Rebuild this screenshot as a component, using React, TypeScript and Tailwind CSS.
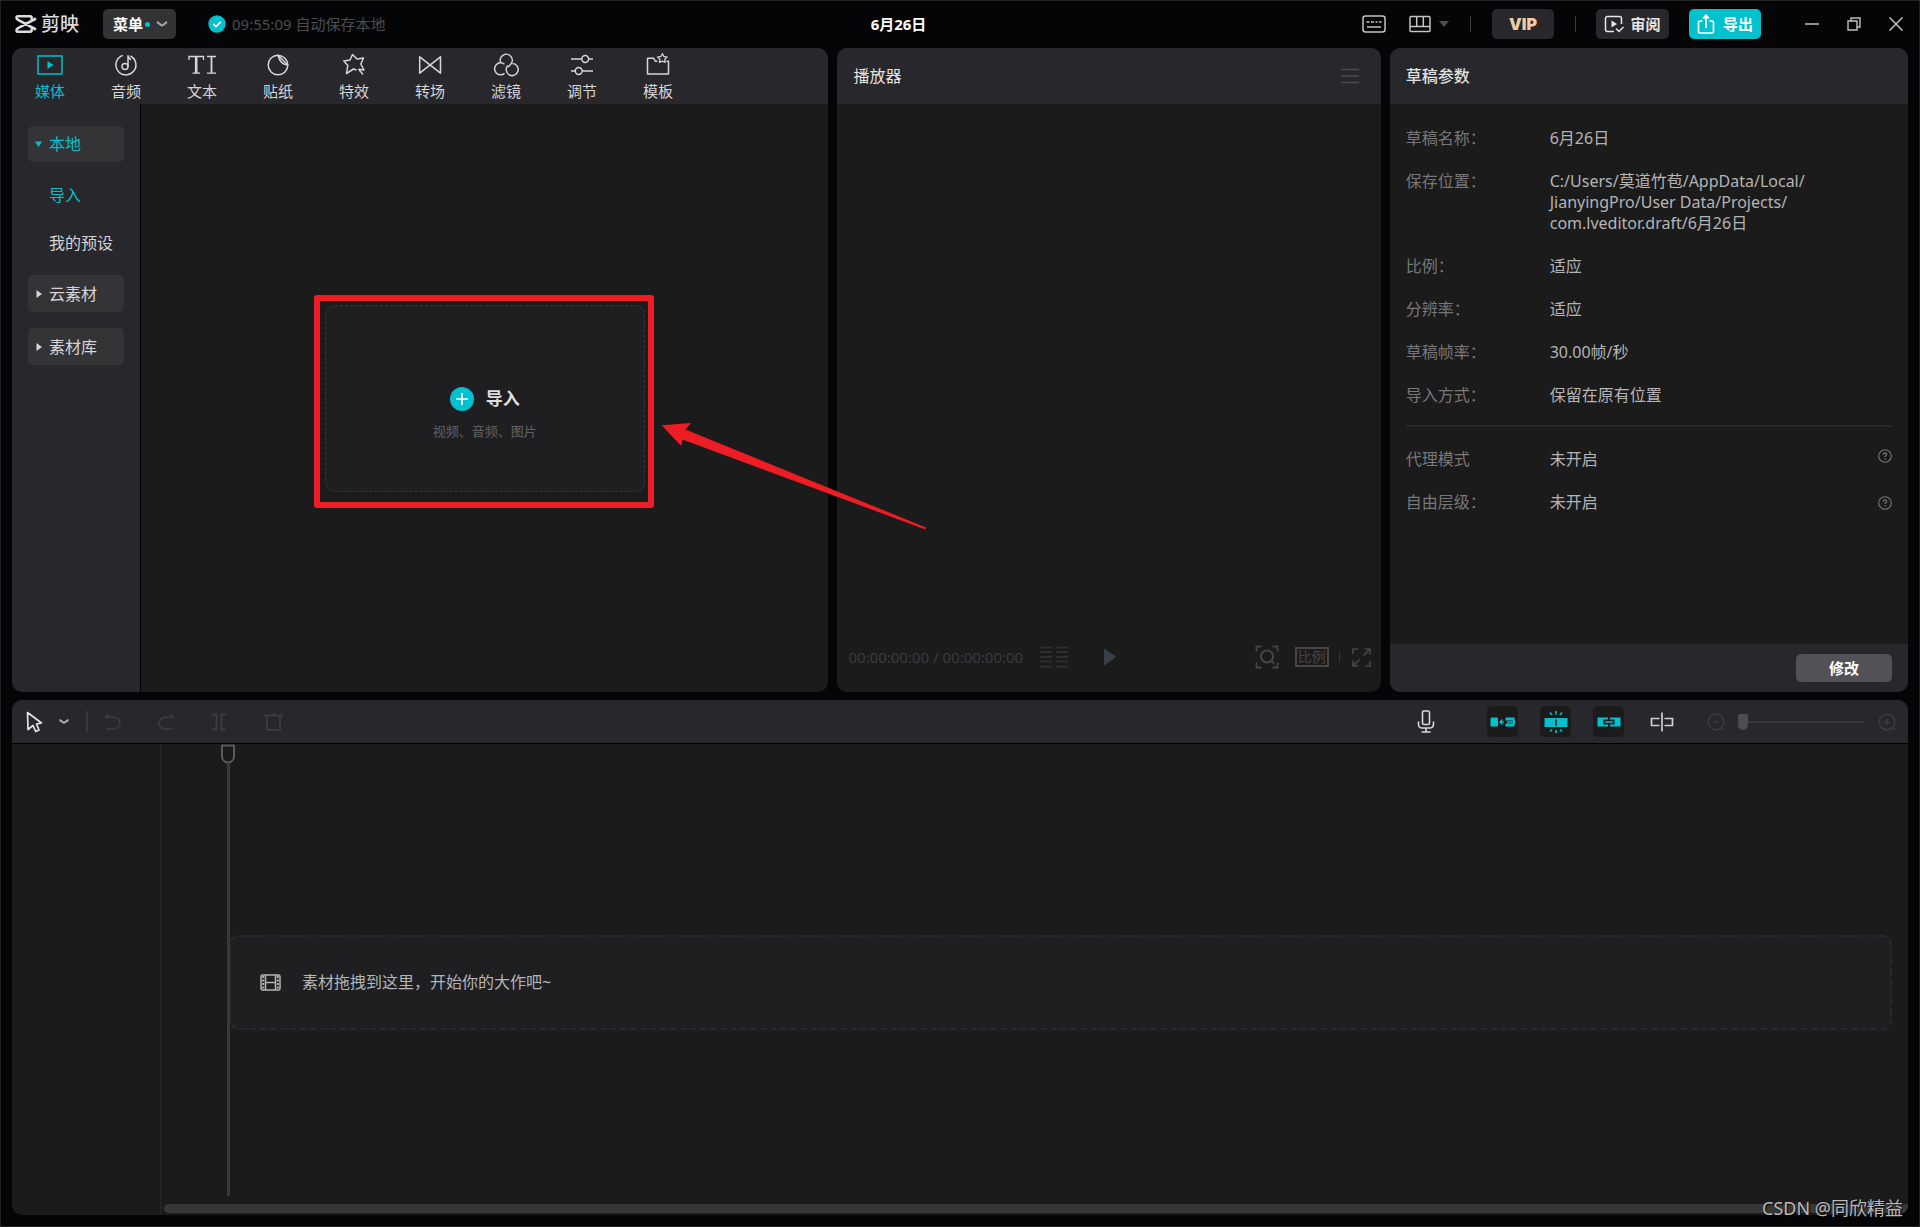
import React from "react";

type IconProps = { children: React.ReactNode; box: string; className: string };

function Icon({ children, box, className }: IconProps) {
  return (
    <svg
      viewBox={box}
      className={`shrink-0 ${className}`}
      fill="none"
      stroke="currentColor"
      strokeWidth="1.5"
      aria-hidden="true"
    >
      {children}
    </svg>
  );
}

const tabs: { label: string; drawing: React.ReactNode }[] = [
  {
    label: "媒体",
    drawing: (
      <>
        <rect x="2" y="3" width="24" height="18" />
        <path d="M11.5 8v8l6-4z" fill="currentColor" stroke="none" />
      </>
    ),
  },
  {
    label: "音频",
    drawing: (
      <>
        <path d="M10.8 2.4A10 10 0 1 0 18.5 3" />
        <circle cx="13" cy="13.5" r="3" />
        <path d="M16 13.5V2.2c0 2.6 1.4 3.6 3 4.6" />
      </>
    ),
  },
  {
    label: "文本",
    drawing: (
      <>
        <path d="M1 7V3.5h14.5V7" strokeWidth="1.3" />
        <path d="M8.2 3.5V20" strokeWidth="2.6" />
        <path d="M4.5 20.2h7.5M19 3.5h9M19 20.2h9" strokeWidth="1.3" />
        <path d="M23.500 3.500v16.500" strokeWidth="1.8" />
      </>
    ),
  },
  {
    label: "贴纸",
    drawing: (
      <>
        <path d="M14 2.2A9.8 9.8 0 1 0 23.8 12L14 2.2z" strokeLinejoin="round" />
        <path d="M14 2.2c1.2 5 3.8 9.3 9.8 9.8C23.8 7 19.500 2.500 14 2.2z" strokeLinejoin="round" />
      </>
    ),
  },
  {
    label: "特效",
    drawing: (
      <>
        <path
          d="M16.500 17l-3-1-7 4.500 1.300-8L3.800 8l6.200-1L12.500 1.500 17 6l6.500-1-2.700 6 3.200 6-5-.800"
          strokeLinejoin="round"
        />
        <path d="M18.500 16l4.500 5.500" />
      </>
    ),
  },
  {
    label: "转场",
    drawing: <path d="M3.7 3.8v16.4L24.5 3.8v16.4z" strokeLinejoin="round" />,
  },
  {
    label: "滤镜",
    drawing: (
      <>
        <path d="M8.7 9.5A6 6 0 1 1 18.5 11.5L16 14" />
        <path d="M12.5 11.3A6 6 0 1 0 12.5 20.4" />
        <path d="M15.8 12.5A6 6 0 1 0 20.5 10.6" />
      </>
    ),
  },
  {
    label: "调节",
    drawing: (
      <>
        <path d="M3 6h10.5M21 6h4M3 18h4M14.500 18H25" />
        <circle cx="17.2" cy="6" r="3.4" />
        <circle cx="10.7" cy="18" r="3.4" />
      </>
    ),
  },
  {
    label: "模板",
    drawing: (
      <>
        <path d="M13.5 8.3h-2L9.500 5.2H3.5v15.9h21V8.3h-2" strokeLinejoin="round" />
        <path d="M18.5.8l1.4 2.7 3 .6-2.1 2.2.3 3-2.8-1.2-2.7 1.2.3-3-2.1-2.2 3-.6z" strokeWidth="1.3" />
      </>
    ),
  },
];

const params: [string, string[]][] = [
  ["草稿名称：", ["6月26日"]],
  ["保存位置：", ["C:/Users/莫道竹苞/AppData/Local/", "JianyingPro/User Data/Projects/", "com.lveditor.draft/6月26日"]],
  ["比例：", ["适应"]],
  ["分辨率：", ["适应"]],
  ["草稿帧率：", ["30.00帧/秒"]],
  ["导入方式：", ["保留在原有位置"]],
];

function Help() {
  return (
    <button aria-label="帮助" className="text-[#77777a]">
      <Icon box="0 0 14 14" className="size-3.5">
        <circle cx="7" cy="7" r="6.3" strokeWidth="1.1" />
        <path d="M5.3 5.7c0-2.3 3.4-2.3 3.4-.2 0 1.2-1.7 1.2-1.7 2.5M7 9.2v1.2" strokeWidth="1.2" />
      </Icon>
    </button>
  );
}

function Header() {
  return (
    <header className="flex h-[47px] items-center pb-px">
      <div className="flex min-w-[434px] items-center">
        <div className="ml-3.5 flex items-center gap-1 text-[#dcdcdc]">
          <Icon box="0 0 22 18" className="h-[18px] w-[22px]">
            <path
              d="M21 3.5L3.5 12.8c-1.6.8-2 1.3-2 2.4 0 1 .6 1.5 1.6 1.5h12c1 0 1.6-.6 1.6-1.6v-1.6M21 14.5L3.5 5.2c-1.6-.8-2-1.3-2-2.4 0-1 .6-1.5 1.6-1.5h12c1 0 1.6.6 1.6 1.6v1.6"
              strokeWidth="2.6"
            />
          </Icon>
          <span className="text-[19px] leading-6 font-medium">剪映</span>
        </div>
        <button className="ml-6 flex h-[30px] items-center rounded-[5px] bg-[#333335] pr-2 pl-2.5 text-[15px] font-bold text-white">
          菜单
          <span className="ml-0.5 size-[5px] rounded-full bg-[#00c1cd]" />
          <Icon box="0 0 12 6" className="ml-1.5 h-1.5 w-3 text-[#a8a8aa]">
            <path d="M1 1c2 1 3.5 3.5 5 3.5S9 2 11 1" strokeWidth="2" />
          </Icon>
        </button>
        <div className="ml-8 flex items-center gap-1.5 text-[15px] text-[#4c4c50]">
          <Icon box="0 0 18 18" className="size-[18px]">
            <circle cx="9" cy="9" r="8.7" fill="#00c1cd" stroke="none" />
            <path d="M5.3 9l2.7 2.6 4.8-4.8" stroke="#fff" strokeWidth="1.8" />
          </Icon>
          <span>09:55:09 自动保存本地</span>
        </div>
      </div>
      <h1 className="flex-1 text-center text-[15px] font-bold text-white">6月26日</h1>
      <div className="flex items-center">
        <button aria-label="快捷键" className="text-[#c4c4c6]">
          <Icon box="0 0 24 18" className="h-[18px] w-6">
            <rect x="1" y="1" width="22" height="16" rx="2.5" />
            <path d="M4.5 7h3M9 7h3M13.5 7h2M17 7h2.500M5 12h14" strokeWidth="1.6" />
          </Icon>
        </button>
        <button aria-label="布局" className="ml-[23px] flex items-center gap-2 text-[#c4c4c6]">
          <Icon box="0 0 22 18" className="h-[18px] w-[22px]">
            <rect x="1" y="1.5" width="20" height="15" rx="1" />
            <path d="M1 11.5h20M7.7 1.5v10M14.3 1.5v10" />
          </Icon>
          <Icon box="0 0 10 6" className="h-1.5 w-2.5 text-[#4d4d50]">
            <path d="M0 0h10L5 6z" fill="currentColor" stroke="none" />
          </Icon>
        </button>
        <span className="ml-[21px] h-4 w-px bg-[#3a3a3c]" />
        <button className="ml-[21px] h-[30px] w-[62px] rounded-[5px] bg-[#28272c] font-['Inter',sans-serif] text-base font-black text-[#efcba6]">
          VIP
        </button>
        <span className="ml-[21px] h-4 w-px bg-[#3a3a3c]" />
        <button className="ml-5 flex h-[30px] w-[73px] items-center justify-center gap-1.5 rounded-[5px] bg-[#28272c] text-[15px] font-bold text-[#e6e6e6]">
          <Icon box="0 0 20 18" className="h-[18px] w-5">
            <path d="M10 16.5H3.5a2 2 0 0 1-2-2v-11a2 2 0 0 1 2-2h12a2 2 0 0 1 2 2V9" />
            <path d="M7.5 5.5v7l5.5-3.5z" fill="currentColor" stroke="none" />
            <path d="M12 13.5l3 3 4.5-4.5" />
          </Icon>
          审阅
        </button>
        <button className="ml-5 flex h-[30px] w-[72px] items-center justify-center gap-2 rounded-[5px] bg-[#00c1cd] text-[15px] font-bold text-white">
          <Icon box="0 0 18 22" className="h-[22px] w-[18px]">
            <path d="M5.5 8H3a1.5 1.5 0 0 0-1.5 1.5v9A1.5 1.5 0 0 0 3 20h12a1.5 1.5 0 0 0 1.5-1.5v-9A1.5 1.5 0 0 0 15 8h-2.5M9 15V3" strokeWidth="1.7" />
            <path d="M9 .8l4 4.7H5z" fill="currentColor" stroke="none" />
          </Icon>
          导出
        </button>
        <div className="mr-4 ml-11 flex items-center gap-7 text-[#c0c0c2]">
          <button aria-label="最小化">
            <Icon box="0 0 14 14" className="size-3.5">
              <path d="M0 7h14" />
            </Icon>
          </button>
          <button aria-label="还原">
            <Icon box="0 0 14 14" className="size-3.5">
              <path d="M1 4h9v9H1zM4 4V1h9v9h-3" strokeWidth="1.4" />
            </Icon>
          </button>
          <button aria-label="关闭">
            <Icon box="0 0 14 14" className="size-3.5">
              <path d="M.5.5l13 13M13.5.5l-13 13" />
            </Icon>
          </button>
        </div>
      </div>
    </header>
  );
}

function Group({ label }: { label: string }) {
  return (
    <button className="mb-4 flex h-[37px] w-full items-center gap-[7px] rounded-[5px] bg-[#343436] pl-2 text-[#d4d4d6]">
      <Icon box="0 0 6 8" className="h-2 w-1.5">
        <path d="M.5 0v8L6 4z" fill="currentColor" stroke="none" />
      </Icon>
      {label}
    </button>
  );
}

function MediaPanel() {
  return (
    <section className="flex flex-col">
      <nav className="flex h-14 rounded-t-[10px] bg-[#28272c]">
        {tabs.map((tab, i) => (
          <button
            key={tab.label}
            className={`flex w-[76px] flex-col items-center gap-1 pt-[5px] text-[15px] leading-5 ${
              i === 0 ? "text-[#00c1cd]" : "text-[#d6d6d8]"
            }`}
          >
            <Icon box="0 0 28 24" className="h-6 w-7">
              {tab.drawing}
            </Icon>
            {tab.label}
          </button>
        ))}
      </nav>
      <div className="flex flex-1">
        <aside className="w-[129px] rounded-bl-[10px] border-r border-black bg-[#28272c] px-4 pt-[22px] text-base">
          <button className="mb-[9px] flex h-9 w-full items-center gap-[7px] rounded-[5px] bg-[#343436] pl-[7px] text-[#00c1cd]">
            <Icon box="0 0 7 6" className="h-1.5 w-[7px]">
              <path d="M0 .5h7L3.500 6z" fill="currentColor" stroke="none" />
            </Icon>
            本地
          </button>
          <button className="block h-12 pl-[21px] text-[#00c1cd]">导入</button>
          <button className="mb-2 block h-12 pl-[21px] whitespace-nowrap text-[#d4d4d6]">我的预设</button>
          <Group label="云素材" />
          <Group label="素材库" />
        </aside>
        <div className="flex flex-1 items-center justify-center rounded-br-[10px] bg-[#1b1b1b]">
          <div className="relative">
            <button className="flex h-[187px] w-80 flex-col items-center rounded-[10px] border border-dashed border-[#37373b] bg-[#1f1f22] pt-[81px]">
              <span className="flex h-6 items-center gap-3 text-[17px] font-bold text-[#dededf]">
                <Icon box="0 0 24 24" className="size-6">
                  <circle cx="12" cy="12" r="12" fill="#00c1cd" stroke="none" />
                  <path d="M12 6v12M6 12h12" stroke="#fff" strokeWidth="1.7" />
                </Icon>
                导入
              </span>
              <span className="mt-[11px] text-[13px] leading-[18px] text-[#626265]">视频、音频、图片</span>
            </button>
            {/* Highlight frame with its pointer, drawn over both panels */}
            <div className="pointer-events-none absolute -top-2.5 -right-[9px] -bottom-4 -left-[11px] z-10 rounded-[3px] border-6 border-[#ee1c24]">
              <svg
                viewBox="0 0 266 108"
                className="absolute top-[121px] left-[341px] h-[108px] w-[266px]"
                fill="#ee1c24"
                aria-hidden="true"
              >
                <path d="M.6 3.3L30 1l-5.500 6.500L265 105.500l-.500 2L21.500 17.500l-1.300 6.500z" />
              </svg>
            </div>
          </div>
        </div>
      </div>
    </section>
  );
}

function PlayerPanel() {
  return (
    <section className="flex flex-col overflow-hidden rounded-[10px] bg-[#1b1b1b]">
      <div className="flex h-14 items-center justify-between bg-[#28272c] pr-[21px] pl-4">
        <h2 className="text-base text-[#e4e4e6]">播放器</h2>
        <button aria-label="播放器菜单" className="text-[#4b4b50]">
          <Icon box="0 0 20 16" className="h-4 w-5">
            <path d="M1 1.5h18M1 8h18M1 14.5h18" />
          </Icon>
        </button>
      </div>
      <div className="flex-1" />
      <div className="flex h-[70px] items-center pr-2.5 pl-[11px] text-[#3a3a3e]">
        <div className="flex flex-1 items-center gap-4">
          <span className="text-[15px]">00:00:00:00 / 00:00:00:00</span>
          <Icon box="0 0 30 22" className="h-[22px] w-[30px] text-[#2e2e33]">
            <path d="M1 1.5h12M17 1.5h12M1 6h12M17 6h12M1 11h12M17 11h12M1 15.5h12M17 15.5h12M1 20.5h12M17 20.5h12" strokeWidth="2" />
          </Icon>
        </div>
        <button aria-label="播放" className="text-[#3b3f4a]">
          <Icon box="0 0 14 18" className="h-[18px] w-3.5">
            <path d="M1 .5v17L13.5 9z" fill="currentColor" stroke="none" />
          </Icon>
        </button>
        <div className="flex flex-1 items-center justify-end text-[#45454a]">
          <button aria-label="缩放">
            <Icon box="0 0 24 24" className="size-6">
              <path d="M1.5 6.5v-5h5M17.5 1.5h5v5M22.5 17.5v5h-5M6.5 22.5h-5v-5" strokeWidth="1.8" />
              <circle cx="12" cy="11.5" r="6" strokeWidth="2" />
              <path d="M16 15.5l3 3" strokeWidth="2" />
            </Icon>
          </button>
          <button className="ml-4 h-5 w-[34px] border-2 border-[#45454a] text-[14px] leading-4">比例</button>
          <span className="ml-2.5 h-2.5 w-px bg-[#37373b]" />
          <button aria-label="全屏" className="ml-3">
            <Icon box="0 0 19 19" className="size-[19px]">
              <path d="M1 6V1h5M12.5 1H18v5.5M18 13v5h-5M6.5 18H1v-5.5M17.5 1.5l-6 6M1.5 17.5l6-6" strokeWidth="1.7" />
            </Icon>
          </button>
        </div>
      </div>
    </section>
  );
}

function DraftPanel() {
  return (
    <section className="flex flex-col overflow-hidden rounded-[10px] bg-[#1b1b1b]">
      <div className="flex h-14 items-center bg-[#28272c] pl-4">
        <h2 className="text-base font-medium text-[#e0e0e2]">草稿参数</h2>
      </div>
      <div className="flex-1 px-4 pt-6 text-base leading-[21px]">
        <dl className="flex flex-col gap-[22px] border-b-2 border-[#28282b] pb-[19px]">
          {params.map(([name, lines]) => (
            <div key={name} className="flex">
              <dt className="w-36 shrink-0 text-[#77777a]">{name}</dt>
              <dd className="text-[#b4b4b6]">
                {lines.map((line) => (
                  <span key={line} className="block whitespace-nowrap">
                    {line}
                  </span>
                ))}
              </dd>
            </div>
          ))}
        </dl>
        <dl className="flex flex-col gap-[22px] pt-[22px]">
          <div className="flex items-start">
            <dt className="w-36 shrink-0 text-[#77777a]">代理模式</dt>
            <dd className="flex flex-1 items-start justify-between text-[#b4b4b6]">
              未开启
              <Help />
            </dd>
          </div>
          <div className="flex items-start">
            <dt className="w-36 shrink-0 text-[#77777a]">自由层级：</dt>
            <dd className="flex flex-1 items-center justify-between text-[#b4b4b6]">
              未开启
              <Help />
            </dd>
          </div>
        </dl>
      </div>
      <div className="flex h-12 items-center justify-end bg-[#28272c] pr-4">
        <button className="h-7 w-24 rounded-[5px] bg-[#525156] text-[15px] font-bold text-white">修改</button>
      </div>
    </section>
  );
}

function Timeline() {
  return (
    <section className="flex grow-[515] basis-0 flex-col overflow-hidden rounded-[10px] bg-[#1b1b1b]">
      <div className="flex h-11 shrink-0 items-center justify-between border-b border-black bg-[#28272c] pr-3 pl-3.5">
        <div className="flex items-center text-[#3c3c42]">
          <button aria-label="选择" className="text-[#e4e4e6]">
            <Icon box="0 0 17 22" className="h-[22px] w-[17px]">
              <path d="M1.5 1.5l14 10.5-5 1 2.5 6-3.3 1.5-2.7-6-5 4z" strokeWidth="1.7" strokeLinejoin="round" />
            </Icon>
          </button>
          <button aria-label="选择工具" className="ml-4 text-[#b0b0b2]">
            <Icon box="0 0 10 6" className="h-1.5 w-2.5">
              <path d="M.5 1c2 .5 3 2.8 4.500 2.800S7.500 1.500 9.500 1" strokeWidth="2" />
            </Icon>
          </button>
          <span className="ml-[17px] h-[21px] w-0.5 bg-[#39393d]" />
          <button aria-label="撤销" className="ml-[17px]">
            <Icon box="0 0 16 18" className="h-[18px] w-4">
              <path d="M4 1L.5 4.2H9a5.8 5.8 0 0 1 0 11.8H1" strokeWidth="1.6" />
            </Icon>
          </button>
          <button aria-label="重做" className="ml-[37px]">
            <Icon box="0 0 16 18" className="h-[18px] w-4">
              <path d="M12 1l3.5 3.2H7A5.8 5.8 0 0 0 7 16h8" strokeWidth="1.6" />
            </Icon>
          </button>
          <button aria-label="分割" className="ml-[37px]">
            <Icon box="0 0 16 18" className="h-[18px] w-4">
              <path d="M1 1.5h4.500v15H1M15 1.500h-4.500v15H15" strokeWidth="1.8" />
            </Icon>
          </button>
          <button aria-label="删除" className="ml-[37px]">
            <Icon box="0 0 19 18" className="h-[18px] w-[19px]">
              <path d="M0 2.5h19M3 2.5v14.300h13V2.500M7.500 1.500h4" strokeWidth="1.8" />
            </Icon>
          </button>
        </div>
        <div className="flex items-center text-[#3c3c42]">
          <button aria-label="录音" className="mr-[52px] text-[#d8d8da]">
            <Icon box="0 0 18 23" className="h-[23px] w-[18px]">
              <rect x="5.5" y="1" width="7" height="13.5" rx="1.5" strokeWidth="1.6" />
              <path d="M1.5 11.5v3a3.5 3.5 0 0 0 3.5 3.5h8a3.5 3.5 0 0 0 3.5-3.5v-3M9 18v4M4.5 22h9" strokeWidth="1.6" />
            </Icon>
          </button>
          <div className="flex items-center gap-[22px] text-[#00c1cd]">
            <button aria-label="主轨磁吸" className="flex size-[31px] items-center justify-center rounded-[5px] bg-[#1b1b1b]">
              <Icon box="0 0 26 12" className="h-3 w-[26px]">
                <rect x="0.5" y="1.5" width="7.5" height="9" rx="1" fill="currentColor" stroke="none" />
                <path d="M15.500 1.500h9v3h-9zM15.500 7.500h9v3h-9zM23 4h2v4h-2z" fill="currentColor" stroke="none" />
                <path d="M10 6h4M17 6h6M12.5 3.500L10 6l2.500 2.500" strokeWidth="1.4" />
              </Icon>
            </button>
            <button aria-label="自动吸附" className="flex size-[31px] items-center justify-center rounded-[5px] bg-[#1b1b1b]">
              <Icon box="0 0 24 24" className="size-6">
                <path d="M.5 8h10.700v9H.5zM12.8 8h10.700v9H12.800z" fill="currentColor" stroke="none" />
                <path d="M11.200 8h1.600v1.500h-1.600zM11.200 15.500h1.600V17h-1.600z" fill="currentColor" stroke="none" />
                <path d="M12 1v3.500M6 2.500l2 2.500M18 2.500L16 5M12 23v-3M6 21.500l2-2M18 21.500l-2-2" strokeWidth="1.6" />
              </Icon>
            </button>
            <button aria-label="联动" className="flex size-[31px] items-center justify-center rounded-[5px] bg-[#1b1b1b]">
              <Icon box="0 0 24 12" className="h-3 w-6">
                <path d="M.5 1.5h10.500v2H6.500v5H11v2H.5zM23.500 1.500H13v2h4.500v5H13v2h10.500z" fill="currentColor" stroke="none" />
                <path d="M8 6h8" strokeWidth="1.6" />
              </Icon>
            </button>
            <button aria-label="预览轴" className="flex size-[31px] items-center justify-center text-[#d0d0d2]">
              <Icon box="0 0 24 20" className="h-5 w-6">
                <path d="M9.5 6.5H1.5v7h8M14.5 6.5h8v7h-8M12 .5v19" strokeWidth="1.7" />
              </Icon>
            </button>
          </div>
          <button aria-label="缩小时间线" className="ml-[30px]">
            <Icon box="0 0 18 18" className="size-[18px]">
              <circle cx="9" cy="9" r="7.8" />
              <path d="M6 9h6M14.5 14.5l2 2.5" />
            </Icon>
          </button>
          <input
            type="range"
            aria-label="时间线缩放"
            defaultValue={0}
            className="mr-[13px] ml-[13px] h-4 w-[127px] appearance-none bg-transparent [&::-webkit-slider-runnable-track]:h-4 [&::-webkit-slider-runnable-track]:bg-[linear-gradient(#38383c,#38383c)] [&::-webkit-slider-runnable-track]:bg-[length:100%_2px] [&::-webkit-slider-runnable-track]:bg-center [&::-webkit-slider-runnable-track]:bg-no-repeat [&::-webkit-slider-thumb]:h-4 [&::-webkit-slider-thumb]:w-2.5 [&::-webkit-slider-thumb]:appearance-none [&::-webkit-slider-thumb]:rounded-t-xs [&::-webkit-slider-thumb]:rounded-b-[5px] [&::-webkit-slider-thumb]:bg-[#4d4d50]"
          />
          <button aria-label="放大时间线">
            <Icon box="0 0 18 18" className="size-[18px]">
              <circle cx="9" cy="9" r="7.8" />
              <path d="M6 9h6M9 6v6M14.5 14.5l2 2.5" />
            </Icon>
          </button>
        </div>
      </div>
      <div className="flex flex-1">
        <div className="w-[149px] border-r border-[#28282c]" />
        <div className="flex min-w-0 flex-1 flex-col">
          <div className="relative flex flex-1 items-center pr-4 pl-[68px]">
            {/* Playhead */}
            <div className="absolute top-0 bottom-2 left-[59px] flex w-4 flex-col items-center">
              <Icon box="0 0 16 20" className="h-5 w-4 text-[#5a5a5e]">
                <path d="M2 1.5h12v11.5c0 3-3 5.5-6 5.5s-6-2.500-6-5.500z" strokeWidth="2" strokeLinejoin="round" />
              </Icon>
              <span className="w-[3px] flex-1 bg-[#38393f]" />
            </div>
            <div className="mt-4 flex h-[95px] flex-1 items-center gap-[21px] rounded-[10px] border-2 border-dashed border-[#2a2a2e] bg-[#1f1f22] pl-[29px] text-base text-[#b4b4b6]">
              <Icon box="0 0 21 17" className="h-[17px] w-[21px]">
                <rect x="1" y="1" width="19" height="15" rx="1.5" />
                <path d="M5.5 1v15M15.5 1v15M5.5 8.5h10" />
                <path d="M3.2 2v13M17.8 2v13" strokeDasharray="2 1.5" strokeWidth="2" />
              </Icon>
              素材拖拽到这里，开始你的大作吧~
            </div>
          </div>
          <div className="mb-0.5 ml-[3px] h-[9px] rounded-l-full bg-[#37373a]" />
        </div>
      </div>
    </section>
  );
}

export default function App() {
  return (
    <div className="relative flex min-h-screen flex-col border border-[#222224] bg-[#050507] font-['Noto_Sans','Noto_Sans_CJK_SC',sans-serif]">
      <Header />
      <main className="flex flex-1 flex-col gap-2 px-[11px] pb-[11px]">
        <div className="grid grow-[644] basis-0 grid-cols-[816fr_543fr_518fr] gap-[9px]">
          <MediaPanel />
          <PlayerPanel />
          <DraftPanel />
        </div>
        <Timeline />
      </main>
      <p className="pointer-events-none absolute right-4 bottom-1.5 text-lg leading-6 text-[#b8b8b8] [text-shadow:1px_1px_1px_#000]">
        CSDN @同欣精益
      </p>
    </div>
  );
}
